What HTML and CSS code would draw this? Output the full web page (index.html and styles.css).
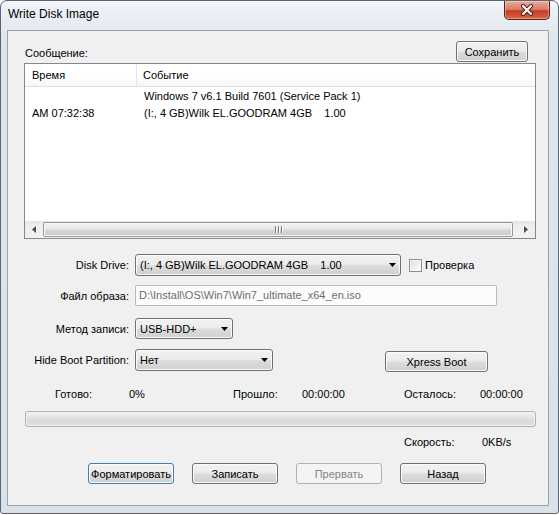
FILE: index.html
```html
<!DOCTYPE html>
<html lang="ru">
<head>
  <meta charset="UTF-8">
  <title>Write Disk Image</title>
  <link rel="stylesheet" href="styles.css">
</head>
<body>
  <div class="window">
    <div class="titlebar">
      <span class="title">Write Disk Image</span>
      <button class="close-btn" aria-label="Close">
        <svg width="14" height="12" viewBox="0 0 14 12">
          <path d="M3 2 L11 10 M11 2 L3 10" stroke="#4a1a12" stroke-width="4" stroke-linecap="round"/>
          <path d="M3 2 L11 10 M11 2 L3 10" stroke="#fff" stroke-width="2.2" stroke-linecap="round"/>
        </svg>
      </button>
    </div>

    <div class="client">
      <!-- Сообщения -->
      <div class="msg-head">
        <span class="msg-label">Сообщение:</span>
        <button class="btn btn-save">Сохранить</button>
      </div>

      <div class="listview">
        <div class="lv-header">
          <div class="lv-col col-time">Время</div>
          <div class="lv-col col-event">Событие</div>
        </div>
        <div class="lv-body">
          <div class="lv-row">
            <div class="lv-col col-time"></div>
            <div class="lv-col col-event">Windows 7 v6.1 Build 7601 (Service Pack 1)</div>
          </div>
          <div class="lv-row">
            <div class="lv-col col-time">AM 07:32:38</div>
            <div class="lv-col col-event">(I:, 4 GB)Wilk EL.GOODRAM 4GB&nbsp;&nbsp;&nbsp;&nbsp;1.00</div>
          </div>
        </div>
        <div class="hscroll">
          <div class="sb-arrow">
            <svg width="4" height="7" viewBox="0 0 4 7"><polygon points="4,0 4,7 0,3.5" fill="#4d4d4d"/></svg>
          </div>
          <div class="sb-thumb">
            <span class="grip"></span><span class="grip"></span><span class="grip"></span>
          </div>
          <div class="sb-arrow">
            <svg width="4" height="7" viewBox="0 0 4 7"><polygon points="0,0 0,7 4,3.5" fill="#4d4d4d"/></svg>
          </div>
        </div>
      </div>

      <!-- Параметры записи -->
      <div class="form-row row-drive">
        <label class="field-label">Disk Drive:</label>
        <div class="combo combo-drive">
          <span class="combo-text">(I:, 4 GB)Wilk EL.GOODRAM 4GB&nbsp;&nbsp;&nbsp;&nbsp;1.00</span>
          <svg class="combo-arrow" width="7" height="4" viewBox="0 0 7 4"><polygon points="0,0 7,0 3.5,4" fill="#000"/></svg>
        </div>
        <span class="check"><span class="check-box"></span>Проверка</span>
      </div>

      <div class="form-row row-file">
        <label class="field-label">Файл образа:</label>
        <div class="textbox">D:\Install\OS\Win7\Win7_ultimate_x64_en.iso</div>
      </div>

      <div class="form-row row-method">
        <label class="field-label">Метод записи:</label>
        <div class="combo combo-method">
          <span class="combo-text">USB-HDD+</span>
          <svg class="combo-arrow" width="7" height="4" viewBox="0 0 7 4"><polygon points="0,0 7,0 3.5,4" fill="#000"/></svg>
        </div>
      </div>

      <div class="form-row row-hide">
        <label class="field-label">Hide Boot Partition:</label>
        <div class="combo combo-hide">
          <span class="combo-text">Нет</span>
          <svg class="combo-arrow" width="7" height="4" viewBox="0 0 7 4"><polygon points="0,0 7,0 3.5,4" fill="#000"/></svg>
        </div>
        <button class="btn btn-xpress">Xpress Boot</button>
      </div>

      <!-- Прогресс -->
      <div class="stats-row">
        <span class="st st-ready">Готово:</span>
        <span class="st st-pct">0%</span>
        <span class="st st-passed">Прошло:</span>
        <span class="st st-time">00:00:00</span>
        <span class="st st-left">Осталось:</span>
        <span class="st">00:00:00</span>
      </div>
      <div class="progress"></div>
      <div class="speed-row">
        <span class="st st-speed">Скорость:</span>
        <span class="st">0KB/s</span>
      </div>

      <div class="actions">
        <button class="btn btn-action btn-default">Форматировать</button>
        <button class="btn btn-action">Записать</button>
        <button class="btn btn-action" disabled>Прервать</button>
        <button class="btn btn-action">Назад</button>
      </div>
    </div>
  </div>
</body>
</html>
```

FILE: styles.css
```css
* {
  box-sizing: border-box;
}
body {
  margin: 0;
  width: 559px;
  height: 515px;
  background: #fff;
  font-family: 'Liberation Sans', Arial, sans-serif;
  font-size: 11px;
  color: #000;
  overflow: hidden;
}
.window {
  width: 559px;
  height: 514px;
  border: 1px solid #5b6673;
  border-radius: 7px 7px 3px 3px;
  background: linear-gradient(180deg, #f1f4f8 0%, #dfe5ec 40px, #dae1e9 100%);
  padding: 0 9px 7px 6px;
  display: flex;
  flex-direction: column;
}
.titlebar {
  height: 29px;
  display: flex;
  justify-content: space-between;
  align-items: flex-start;
}
.title {
  font-size: 12px;
  line-height: 16px;
  padding: 5px 0 0 1px;
  color: #000;
}
.close-btn {
  width: 46px;
  height: 19px;
  margin-right: -1px;
  border: 1px solid #5a2118;
  border-top: none;
  border-radius: 0 0 5px 5px;
  background: linear-gradient(180deg, #e9a99b 0%, #dd7f6b 45%, #c43c24 55%, #d9634a 100%);
  box-shadow: inset 0 0 0 1px rgba(255,255,255,0.35);
  display: flex;
  align-items: center;
  justify-content: center;
  padding: 0;
}
.client {
  flex: 1;
  background: #f0f0f0;
  border: 1px solid #98a3b0;
  padding: 10px 12px 0 16px;
  display: flex;
  flex-direction: column;
}

/* buttons */
.btn {
  font-family: inherit;
  font-size: 11px;
  color: #000;
  border: 1px solid #707070;
  border-radius: 3px;
  background: linear-gradient(180deg, #f2f2f2 0%, #ebebeb 48%, #dddddd 52%, #cfcfcf 100%);
  box-shadow: inset 0 0 0 1px #fbfbfb;
  padding: 0;
  height: 21px;
  white-space: nowrap;
  overflow: hidden;
}
.btn:disabled {
  border-color: #adb2b5;
  background: #f4f4f4;
  box-shadow: none;
  color: #838383;
}
.btn-default {
  border-color: #3c7fb1;
}

.msg-head {
  height: 21px;
  display: flex;
  justify-content: space-between;
  align-items: flex-end;
  padding-right: 8px;
}
.msg-label {
  line-height: 13px;
  margin: 0 0 2px 1px;
}
.btn-save {
  width: 72px;
}

/* list view */
.listview {
  margin-top: 1px;
  height: 176px;
  background: #fff;
  border: 1px solid #828790;
  display: flex;
  flex-direction: column;
}
.lv-header {
  height: 23px;
  display: flex;
  background: linear-gradient(180deg, #fff 0%, #fff 60%, #f5f6f7 100%);
  border-bottom: 1px solid #dfe2e6;
}
.lv-header .lv-col {
  line-height: 22px;
}
.lv-header .col-time {
  border-right: 1px solid #e3e6ea;
}
.col-time {
  width: 112px;
  padding-left: 7px;
}
.col-event {
  flex: 1;
  padding-left: 6px;
  white-space: nowrap;
}
.lv-row .col-event {
  padding-left: 7px;
}
.lv-body {
  flex: 1;
  padding-top: 1px;
}
.lv-row {
  display: flex;
  height: 17px;
  line-height: 17px;
}
.hscroll {
  height: 17px;
  display: flex;
  align-items: center;
  background: linear-gradient(180deg, #e4e4e4 0%, #efefef 30%, #f0f0f0 100%);
}
.sb-arrow {
  width: 18px;
  height: 17px;
  display: flex;
  align-items: center;
  justify-content: center;
}
.sb-thumb {
  flex: 1;
  height: 15px;
  margin: 0 4px 0 0;
  border: 1px solid #979797;
  border-radius: 2px;
  background: linear-gradient(180deg, #f3f3f3 0%, #e8e8e8 45%, #d6d6d6 55%, #cacaca 100%);
  box-shadow: inset 0 0 0 1px #f8f8f8;
  display: flex;
  justify-content: center;
  align-items: center;
  gap: 2px;
}
.grip {
  width: 1px;
  height: 7px;
  background: #7a7a7a;
  box-shadow: 1px 0 0 #fff;
}

/* form rows */
.form-row {
  display: flex;
  align-items: center;
}
.field-label {
  width: 105px;
  text-align: right;
  margin-right: 6px;
  white-space: nowrap;
}
.row-drive {
  margin-top: 15px;
  height: 22px;
}
.row-file {
  margin-top: 9px;
  height: 21px;
}
.row-method {
  margin-top: 12px;
  height: 21px;
}
.row-hide {
  margin-top: 10px;
  height: 22px;
}
.combo {
  height: 100%;
  border: 1px solid #707070;
  border-radius: 3px;
  background: linear-gradient(180deg, #f2f2f2 0%, #ebebeb 48%, #dddddd 52%, #cfcfcf 100%);
  box-shadow: inset 0 0 0 1px #fbfbfb;
  display: flex;
  align-items: center;
  justify-content: space-between;
  padding: 0 4px 0 4px;
}
.combo-text {
  white-space: nowrap;
}
.combo-drive {
  width: 266px;
}
.combo-method {
  width: 98px;
}
.combo-hide {
  width: 138px;
}
.check {
  display: flex;
  align-items: center;
  margin-left: 8px;
}
.check-box {
  width: 13px;
  height: 13px;
  border: 1px solid #8e8f8f;
  background: linear-gradient(135deg, #dcdcdc 0%, #f6f6f6 70%, #fff 100%);
  box-shadow: inset 0 0 0 1px #f4f4f4;
  margin-right: 3px;
}
.textbox {
  width: 362px;
  height: 100%;
  border: 1px solid #b8bcc2;
  border-radius: 2px;
  background: #fcfcfc;
  color: #6d6d6d;
  line-height: 19px;
  padding-left: 3px;
}
.btn-xpress {
  width: 103px;
  margin-left: 112px;
  align-self: flex-start;
  margin-top: 2px;
}

/* progress */
.stats-row,
.speed-row {
  display: flex;
  line-height: 13px;
  height: 13px;
}
.stats-row {
  margin-top: 17px;
  padding-left: 31px;
}
.st-ready { width: 74px; }
.st-pct { width: 104px; }
.st-passed { width: 69px; }
.st-time { width: 102px; }
.st-left { width: 76px; }
.progress {
  margin: 10px 0 0 1px;
  width: 511px;
  height: 16px;
  border: 1px solid #b2b2b2;
  border-radius: 3px;
  background: linear-gradient(180deg, #f3f3f3 0%, #e6e6e6 30%, #d9d9d9 70%, #e3e3e3 100%);
  box-shadow: inset 0 0 0 1px #f0f0f0;
}
.speed-row {
  margin-top: 9px;
  padding-left: 380px;
}
.st-speed { width: 78px; }

.actions {
  margin-top: 14px;
  padding-left: 64px;
  display: flex;
  gap: 18px;
}
.btn-action {
  width: 86px;
}
```
